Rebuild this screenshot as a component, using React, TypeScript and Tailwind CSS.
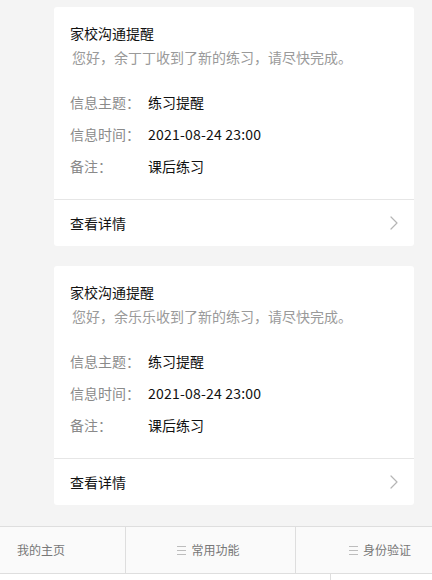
import { ChevronRight } from "lucide-react";

const notices = [
  { name: "余丁丁" },
  { name: "余乐乐" },
];

const font = { fontFamily: '"Noto Sans CJK SC", "Noto Sans", sans-serif' };

const NoticeCard = ({ name }: { name: string }) => (
  <div className="w-[360px] ml-[54px] bg-white rounded-[3px]">
    <div className="px-4 pt-4 pb-[23px]">
      <p className="text-[14px] leading-[20px] text-[#111]">家校沟通提醒</p>
      <p className="mt-1 pl-[2px] text-[14px] leading-[20px] text-[#9a9a9a]">
        您好，{name}收到了新的练习，请尽快完成。
      </p>
      <div className="mt-[25px] flex flex-col gap-3">
        <div className="flex text-[14px] leading-[20px]">
          <span className="w-[78px] shrink-0 text-[#8a8a8a]">信息主题：</span>
          <span className="text-[#111]">练习提醒</span>
        </div>
        <div className="flex text-[14px] leading-[20px]">
          <span className="w-[78px] shrink-0 text-[#8a8a8a]">信息时间：</span>
          <span className="text-[#111] tracking-[0.2px]">2021-08-24 23:00</span>
        </div>
        <div className="flex text-[14px] leading-[20px]">
          <span className="w-[78px] shrink-0 text-[#8a8a8a]">备注：</span>
          <span className="text-[#111]">课后练习</span>
        </div>
      </div>
    </div>
    <div className="h-[47px] border-t border-[#e6e6e6] flex items-center justify-between pl-4 pr-[8px]">
      <span className="text-[14px] text-[#111]">查看详情</span>
      <ChevronRight size={24} strokeWidth={1.2} className="text-[#b5b5b5]" />
    </div>
  </div>
);

const Bars = () => (
  <span className="inline-flex flex-col gap-[3px] mr-[5px]">
    <span className="block w-[9px] h-px bg-[#bdbdbd]" />
    <span className="block w-[9px] h-px bg-[#bdbdbd]" />
    <span className="block w-[9px] h-px bg-[#bdbdbd]" />
  </span>
);

export default function App() {
  return (
    <div className="min-h-[580px] h-[580px] overflow-hidden bg-[#f4f4f4]" style={font}>
      <div className="pt-[7px] flex flex-col gap-5">
        {notices.map((n) => (
          <NoticeCard key={n.name} name={n.name} />
        ))}
      </div>
      <div className="mt-[21px] h-[48px] flex bg-[#fafafa] border-y border-[#dedede] text-[12px] text-[#777]">
        <div className="w-[126px] flex items-center pl-[17px] border-r border-[#dedede]">我的主页</div>
        <div className="w-[170px] flex items-center justify-center pr-[4px] border-r border-[#dedede]">
          <Bars />
          常用功能
        </div>
        <div className="flex-1 flex items-center justify-end pr-[21px]">
          <Bars />
          身份验证
        </div>
      </div>
      <div className="h-[10px] flex bg-white">
        <div className="w-[331px] border-r border-[#dedede]" />
      </div>
    </div>
  );
}
